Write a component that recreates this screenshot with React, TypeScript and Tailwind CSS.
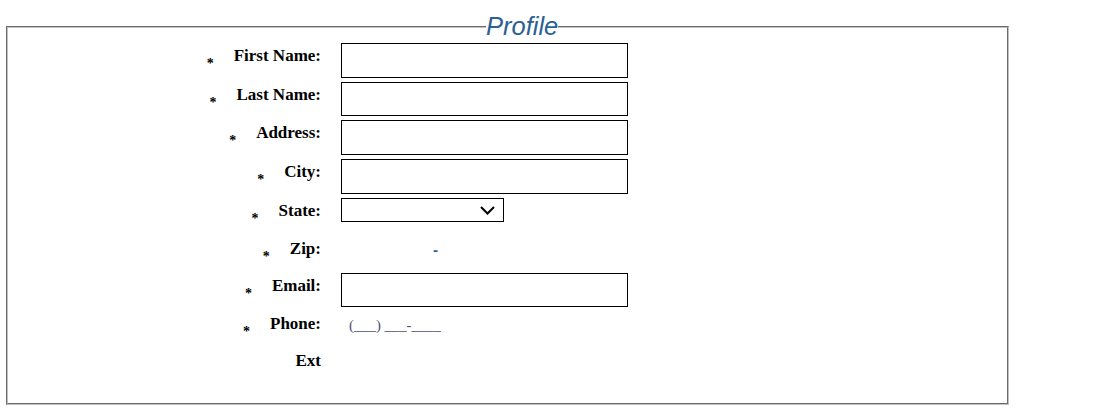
import React from "react";

const labelCls =
  "w-[313px] shrink-0 flex justify-end items-start pt-[3px] font-['Liberation_Serif','Times_New_Roman',serif] font-bold text-[17px] leading-[20px] text-black";

function Label({ text, required = true }: { text: string; required?: boolean }) {
  return (
    <div className={labelCls}>
      <span>
        {required && (
          <span className="text-[14px] align-[-7px] mr-[20px]">*</span>
        )}
        {text}
      </span>
    </div>
  );
}

function TextBox() {
  return (
    <input
      type="text"
      className="w-[287px] h-full border border-black bg-white outline-none"
    />
  );
}

function Row({
  h,
  label,
  required = true,
  children,
}: {
  h: string;
  label: string;
  required?: boolean;
  children?: React.ReactNode;
}) {
  return (
    <div className={`flex items-start ${h}`}>
      <Label text={label} required={required} />
      <div className="ml-[20px] h-full flex items-start">{children}</div>
    </div>
  );
}

export default function App() {
  return (
    <div className="bg-white w-[1110px] h-[414px] pt-[12px] pl-[6px] font-['Liberation_Sans',Arial,sans-serif]">
      <fieldset className="w-[1003px] border-2 [border-style:groove] border-[#c0c0c0] pb-[35px]">
        <legend className="ml-[478px] font-['Liberation_Sans',Arial,sans-serif] italic text-[25.5px] leading-[29px] text-[#2b6193]">
          Profile
        </legend>
        <div className="flex flex-col gap-[4px] pt-[2px]">
          <Row h="h-[34.7px]" label="First Name:">
            <TextBox />
          </Row>
          <Row h="h-[34.7px]" label="Last Name:">
            <TextBox />
          </Row>
          <Row h="h-[34.7px]" label="Address:">
            <TextBox />
          </Row>
          <Row h="h-[34.7px]" label="City:">
            <TextBox />
          </Row>
          <Row h="h-[34.7px]" label="State:">
            <div className="relative w-[163px] h-[24px] border border-black bg-white">
              <select className="w-full h-full appearance-none bg-transparent outline-none text-[13px]">
                <option value=""></option>
              </select>
              <svg
                className="absolute right-[8px] top-[7px] pointer-events-none"
                width="15"
                height="9"
                viewBox="0 0 15 9"
              >
                <path d="M1 1 L7.5 7.5 L14 1" fill="none" stroke="black" strokeWidth="2" />
              </svg>
            </div>
          </Row>
          <Row h="h-[32.2px]" label="Zip:">
            <div className="flex items-start pt-[4px]">
              <input type="text" className="w-[90px] h-[20px] bg-transparent outline-none" />
              <span className="ml-[2px] text-[15px] font-bold leading-[20px] text-[#2b6193]">-</span>
              <input type="text" className="w-[60px] h-[20px] bg-transparent outline-none" />
            </div>
          </Row>
          <Row h="h-[34.7px]" label="Email:">
            <TextBox />
          </Row>
          <Row h="h-[33px]" label="Phone:">
            <input
              type="text"
              placeholder="(___) ___-____"
              className="w-[160px] h-[24px] mt-[2px] pl-[8px] bg-transparent outline-none text-[14.7px] font-['Liberation_Serif','Times_New_Roman',serif] placeholder:text-[#50506e]"
            />
          </Row>
          <Row h="h-[20px]" label="Ext" required={false} />
        </div>
      </fieldset>
    </div>
  );
}
